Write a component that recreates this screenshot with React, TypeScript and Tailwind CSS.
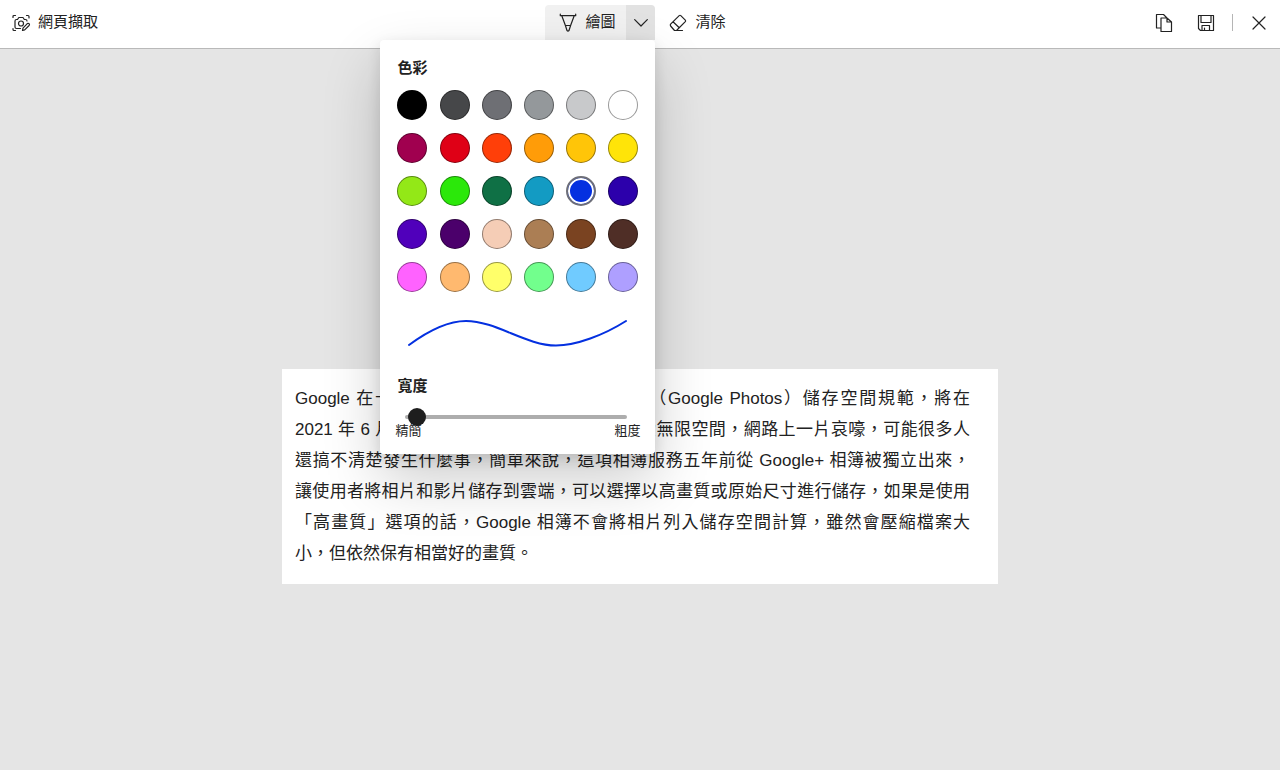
import { useState } from "react";

const swatches = [
  ["黑色", "#000000"], ["深灰", "#464749"], ["灰色", "#6e6f74"], ["中灰", "#94989b"], ["淺灰", "#c8c9cb"], ["白色", "#ffffff"],
  ["莓紅", "#a0004f"], ["紅色", "#df0016"], ["橙紅", "#ff3f09"], ["橙色", "#ff9c08"], ["金色", "#ffc508"], ["黃色", "#ffe408"],
  ["萊姆", "#93e817"], ["綠色", "#2be80a"], ["深綠", "#0f7045"], ["青色", "#139bc3"], ["藍色", "#0430e0"], ["靛色", "#2c00ab"],
  ["藍紫", "#5000bb"], ["深紫", "#4b006b"], ["膚色", "#f5cdb6"], ["淺棕", "#ab7e54"], ["棕色", "#7a4321"], ["深棕", "#4f2e26"],
  ["粉紅", "#ff62ff"], ["淺橙", "#ffb96f"], ["淺黃", "#ffff6a"], ["淺綠", "#72ff8d"], ["天藍", "#70cbff"], ["淡紫", "#ae9fff"],
];

const lines = [
  "Google 在十一月中宣布將更改 Google 相簿（Google Photos）儲存空間規範，將在",
  "2021 年 6 月 1 日起不再提供高畫質相片的免費無限空間，網路上一片哀嚎，可能很多人",
  "還搞不清楚發生什麼事，簡單來說，這項相簿服務五年前從 Google+ 相簿被獨立出來，",
  "讓使用者將相片和影片儲存到雲端，可以選擇以高畫質或原始尺寸進行儲存，如果是使用",
  "「高畫質」選項的話，Google 相簿不會將相片列入儲存空間計算，雖然會壓縮檔案大",
];

const stroke = {
  fill: "none",
  stroke: "currentColor",
  strokeWidth: 1.2,
  strokeLinecap: "round",
  strokeLinejoin: "round",
} as const;

function CaptureIcon() {
  return (
    <svg width="20" height="20" viewBox="0 0 20 20" {...stroke} aria-hidden="true">
      <path d="M2 4.500V3.500Q2 2.500 3 2.500H4.500M15.500 2.500H17Q18 2.500 18 3.500V5M2 15.500V16.500Q2 17.500 3 17.500H4.500" />
      <path d="M9.500 15.500H5.500Q4 15.500 4 14V8Q4 6.500 5.500 6.500H6.500L7.800 4.500H12L13.300 6.500H14.500Q16 6.500 16 8" />
      <circle cx="10" cy="10.500" r="2.500" />
      <path d="M11.500 17.500L12 15.200L16.300 10.600Q17.300 9.900 18.100 10.700Q18.900 11.600 18.100 12.500L13.700 16.900Z" />
    </svg>
  );
}

function PenIcon() {
  return (
    <svg width="20" height="20" viewBox="0 0 20 20" {...stroke} aria-hidden="true">
      <path d="M2.300 1.200V2.700H17.700V1.200M3.800 2.700L7.400 12.500H12.600L16.200 2.700M7.400 12.500L9 17.500Q10 18.700 11 17.500L12.600 12.500" />
    </svg>
  );
}

function EraserIcon() {
  return (
    <svg width="20" height="20" viewBox="0 0 20 20" {...stroke} aria-hidden="true">
      <path d="M2.600 11.200L11.200 2.600Q12 1.900 12.800 2.600L17.300 7.100Q18 7.900 17.300 8.700L8.500 17.500H6.500L2.600 13Q1.900 12.100 2.600 11.200ZM5 8.800L11.300 14.700M8.500 17.500H14.500" />
    </svg>
  );
}

function CopyIcon() {
  return (
    <svg width="20" height="20" viewBox="0 0 20 20" {...stroke} aria-hidden="true">
      <path d="M7 15H2.500V1.500H9.500L12.500 4.500M7 5H13L17.500 9V18.500H7ZM13 5V9H17.500" />
    </svg>
  );
}

function SaveIcon() {
  return (
    <svg width="20" height="20" viewBox="0 0 20 20" {...stroke} aria-hidden="true">
      <path d="M2.500 2.500H17.500V17.500H4.500L2.500 15.500ZM5 2.500V9.500H15V2.500M6 17.500V12.500H13.500V17.500M8.500 15V17.500" />
    </svg>
  );
}

export default function App() {
  const [color, setColor] = useState("#0430e0");
  const [width, setWidth] = useState(1);

  return (
    <div className="min-h-screen bg-[#e5e5e5] font-['Liberation_Sans','Noto_Sans_CJK_TC',sans-serif] text-[#222]">
      <header className="grid h-[49px] grid-cols-[1fr_auto_1fr] items-start border-b border-[#b9b9b9] bg-white pt-[5px] text-[15px]">
        <h1 className="flex h-[35px] items-center gap-[7px] pl-[11px]">
          <CaptureIcon />
          網頁擷取
        </h1>

        <div className="flex">
          <div className="relative flex h-[35px]">
            <button type="button" className="flex w-[81px] items-center gap-[7px] rounded-tl-sm bg-[#f1f1f1] pl-[13px]">
              <PenIcon />
              繪圖
            </button>
            <button type="button" aria-label="繪圖選項" aria-expanded="true" className="flex w-[29px] items-center justify-center rounded-tr-sm bg-[#e2e2e2]">
              <svg width="14" height="8" viewBox="0 0 14 8" {...stroke} aria-hidden="true">
                <path d="M.7 .7L7 7L13.300 .7" />
              </svg>
            </button>

            <div className="absolute top-full right-0 z-10 w-[275px] rounded-[4px] bg-white px-[17px] pt-[18px] pb-[15px] shadow-[0_26px_58px_rgba(0,0,0,0.2),0_5px_14px_rgba(0,0,0,0.12)]">
              <fieldset>
                <legend className="leading-5 font-bold">色彩</legend>
                <div className="mt-3 grid grid-cols-[repeat(6,30px)] justify-between gap-y-[13px]">
                  {swatches.map(([name, value]) => (
                    <input
                      key={value}
                      type="radio"
                      name="color"
                      aria-label={name}
                      checked={color === value}
                      onChange={() => setColor(value)}
                      style={{ backgroundColor: value }}
                      className="size-[30px] appearance-none rounded-full border border-black/40 checked:border-2 checked:border-[#6e6f78] checked:shadow-[inset_0_0_0_2px_white]"
                    />
                  ))}
                </div>
              </fieldset>
              <svg className="mt-[18px] block h-10 w-full" viewBox="0 0 241 40" fill="none" stroke={color} strokeWidth="2" strokeLinecap="round" aria-hidden="true">
                <path d="M12 35C31 21 51 11 69 11C99 11 129 35.500 159 35.500C179 35.500 207 25 229 11" />
              </svg>
              <label htmlFor="stroke-width" className="mt-[26px] block leading-5 font-bold">
                寬度
              </label>
              <div className="mt-3 mr-[11px] ml-2">
                <input
                  id="stroke-width"
                  type="range"
                  min="0"
                  max="100"
                  value={width}
                  onChange={(e) => setWidth(Number(e.target.value))}
                  className="relative z-10 block h-[18px] w-full appearance-none bg-transparent [&::-webkit-slider-runnable-track]:h-1 [&::-webkit-slider-runnable-track]:rounded-full [&::-webkit-slider-runnable-track]:bg-[#adadad] [&::-webkit-slider-thumb]:-mt-[7px] [&::-webkit-slider-thumb]:size-[18px] [&::-webkit-slider-thumb]:appearance-none [&::-webkit-slider-thumb]:rounded-full [&::-webkit-slider-thumb]:bg-[#1e1e1e]"
                />
              </div>
              <div className="-mx-0.5 -mt-[3px] flex justify-between text-[13px] leading-4">
                <span>精簡</span>
                <span>粗度</span>
              </div>
            </div>
          </div>
          <button type="button" className="flex h-[35px] items-center gap-[7px] pr-[9px] pl-[13px]">
            <EraserIcon />
            清除
          </button>
        </div>

        <div className="flex h-[35px] items-center justify-end pr-[14px]">
          <button type="button" aria-label="複製" className="mr-[22px]">
            <CopyIcon />
          </button>
          <button type="button" aria-label="儲存">
            <SaveIcon />
          </button>
          <span className="mr-[19px] ml-[16px] h-[17px] w-px bg-[#b5b5b5]" />
          <button type="button" aria-label="關閉">
            <svg width="14" height="14" viewBox="0 0 14 14" {...stroke} aria-hidden="true">
              <path d="M1 1L13 13M13 1L1 13" />
            </svg>
          </button>
        </div>
      </header>

      <main className="px-4 pt-80 pb-10">
        <article className="mx-auto max-w-[716px] bg-white pt-[14px] pr-7 pb-[15px] pl-[13px]">
          <p className="text-justify text-[17px] leading-[31px]">
            {lines.map((line) => (
              <span key={line} className="block [text-align-last:justify]">
                {line}
              </span>
            ))}
            小，但依然保有相當好的畫質。
          </p>
        </article>
      </main>
    </div>
  );
}
